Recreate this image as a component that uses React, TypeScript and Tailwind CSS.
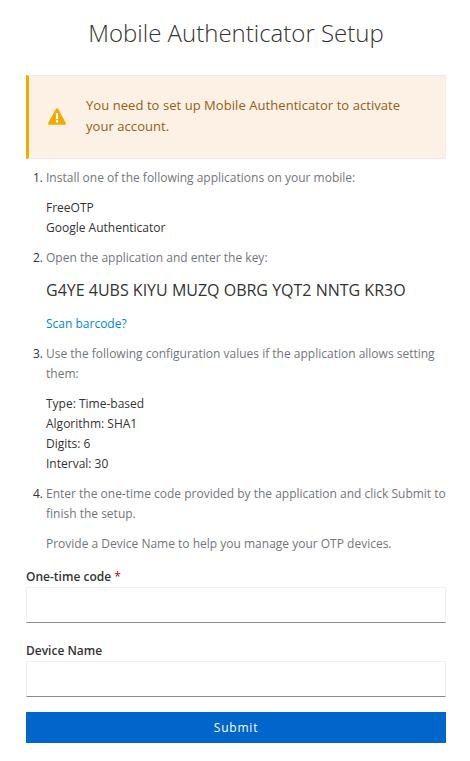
import React from 'react';

const font = "font-['Open_Sans','Noto_Sans',sans-serif]";
const num = 'w-[20px] pl-[7px] text-[#333] shrink-0';

export default function App() {
  return (
    <div className={`${font} w-[470px] h-[761px] bg-white overflow-hidden`}>
      <div className="ml-[26px] w-[420px]">
        <h1 className="pt-[17px] text-center text-[24px] leading-[32px] font-light text-[#333]">
          Mobile Authenticator Setup
        </h1>

        <div className="mt-[26px] flex items-center gap-[21px] border border-[#f3ebe3] border-l-[3px] border-l-[#f0ab00] bg-[#fdf0e5] h-[84px] pl-[19px] pr-4">
          <svg viewBox="0 0 18 17" className="w-[18px] h-[17px] shrink-0 -mt-[2px]">
            <path d="M9 0.2c-.5 0-1 .3-1.2.7L0.2 15c-.4.8.2 1.8 1.1 1.8h15.4c.9 0 1.5-1 1.1-1.8L10.2.9C10 .5 9.5.2 9 .2z" fill="#f0ab00" />
            <rect x="7.9" y="5.2" width="2.2" height="6" fill="#fff" />
            <rect x="7.9" y="12.2" width="2.2" height="2.2" fill="#fff" />
          </svg>
          <p className="-ml-[1px] -mt-[3px] text-[13px] leading-[21px] text-[#8f6214] tracking-[0.06px]">
            You need to set up Mobile Authenticator to activate your account.
          </p>
        </div>

        <ol className="mt-[9px] text-[12px] leading-[20px] text-[#72767b]">
          <li className="flex">
            <span className={num}>1.</span>
            <div className="flex-1">
              <p>Install one of the following applications on your mobile:</p>
              <div className="mt-[10px] text-[#333]">
                <p>FreeOTP</p>
                <p>Google Authenticator</p>
              </div>
            </div>
          </li>
          <li className="flex mt-[10px]">
            <span className={num}>2.</span>
            <div className="flex-1">
              <p>Open the application and enter the key:</p>
              <p className="mt-[10px] text-[16px] leading-[24px] text-[#333]">
                G4YE 4UBS KIYU MUZQ OBRG YQT2 NNTG KR3O
              </p>
              <p className="mt-[12px] text-[#0088ce]">Scan barcode?</p>
            </div>
          </li>
          <li className="flex mt-[10px]">
            <span className={num}>3.</span>
            <div className="flex-1">
              <p>Use the following configuration values if the application allows setting them:</p>
              <div className="mt-[10px] text-[#333]">
                <p>Type: Time-based</p>
                <p>Algorithm: SHA1</p>
                <p>Digits: 6</p>
                <p>Interval: 30</p>
              </div>
            </div>
          </li>
          <li className="flex mt-[10px]">
            <span className={num}>4.</span>
            <div className="flex-1">
              <p>Enter the one-time code provided by the application and click Submit to finish the setup.</p>
              <p className="mt-[10px]">Provide a Device Name to help you manage your OTP devices.</p>
            </div>
          </li>
        </ol>

        <form className="mt-[13px]">
          <label className="block text-[12px] leading-[20px] font-semibold text-[#333]">
            One-time code <span className="text-[#a30000] font-normal">*</span>
          </label>
          <input className="block w-full h-[36px] border border-[#f0f0f0] border-b-[#8a8d90] bg-white" />
          <label className="block mt-[18px] text-[12px] leading-[20px] font-semibold text-[#333]">
            Device Name
          </label>
          <input className="block w-full h-[36px] border border-[#f0f0f0] border-b-[#8a8d90] bg-white" />
          <button type="button" className="mt-[15px] block w-full h-[31px] bg-[#0066cc] text-white text-[12px] tracking-[0.8px]">
            Submit
          </button>
        </form>
      </div>
    </div>
  );
}
